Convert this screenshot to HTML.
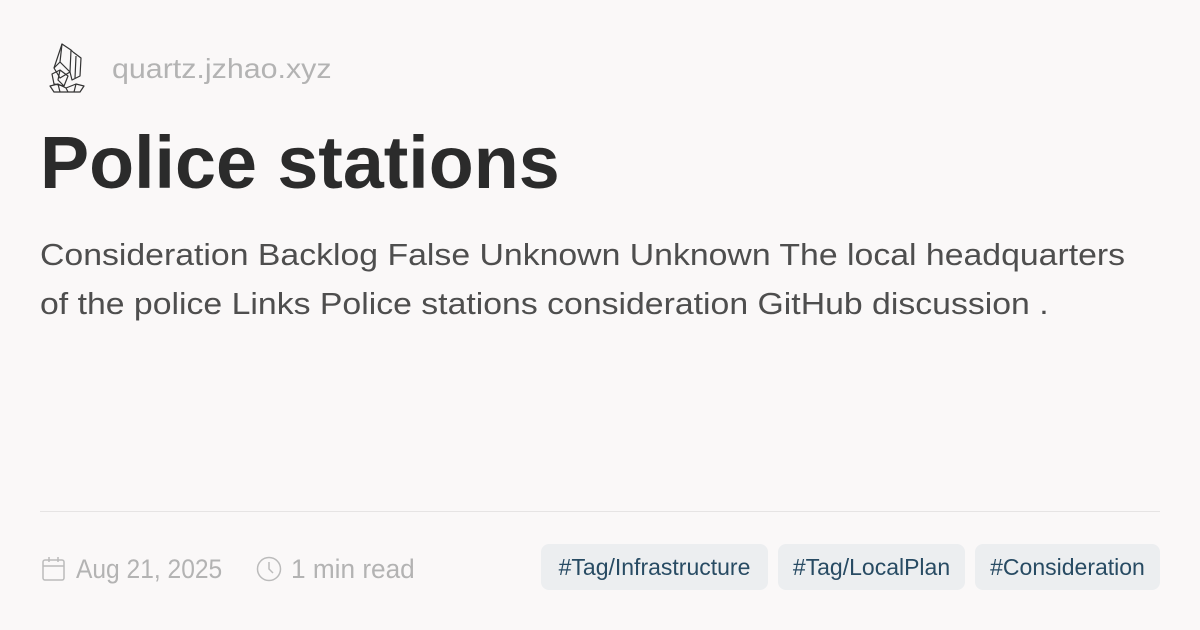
<!DOCTYPE html>
<html><head><style>
body{margin:0;width:1200px;height:630px;background:#faf8f8;font-family:"Liberation Sans",sans-serif;position:relative;overflow:hidden}
.a{position:absolute;white-space:nowrap;transform-origin:left top}
.tag{position:absolute;top:544px;height:46px;background:#eceef0;border-radius:8px;color:#284b63;font-size:23px;line-height:46px;text-align:center;overflow:hidden}
</style></head><body>
<svg class="a" style="left:46px;top:42px" width="44" height="52" viewBox="0 0 44 52" fill="none" stroke="#333" stroke-width="1.2" stroke-linejoin="round">
<path d="M16 2 L25 8 L24 30 L14 36 L8 26 Z"/><path d="M16 2 L14 20 L8 26"/><path d="M14 20 L24 30"/>
<path d="M27 10 L35 16 L34 34 L26 38 L24 30"/><path d="M27 10 L25 8"/><path d="M30 14 L29 36"/>
<path d="M6 32 L14 28 L22 34 L18 44 L8 42 Z"/><path d="M14 28 L12 38 L18 44"/>
<path d="M4 44 L12 42 L20 46 L30 42 L38 44 L34 50 L8 50 Z"/><path d="M12 42 L14 50 M20 46 L22 50 M30 42 L28 50"/>
</svg>
<div class="a" style="left:112px;top:53px;font-size:28px;color:#b3b3b3;transform:scaleX(1.085)">quartz.jzhao.xyz</div>
<div class="a" style="left:40px;top:120px;font-size:74px;font-weight:bold;color:#2b2b2b;transform:scaleX(.995)">Police stations</div>
<div class="a" style="left:40px;top:237px;font-size:31px;color:#4e4e4e;transform:scaleX(1.09)">Consideration Backlog False Unknown Unknown The local headquarters</div>
<div class="a" style="left:40px;top:286px;font-size:31px;color:#4e4e4e;transform:scaleX(1.09)">of the police Links Police stations consideration GitHub discussion .</div>
<div class="a" style="left:40px;top:511px;width:1120px;height:1px;background:#e6e4e4"></div>
<svg class="a" style="left:42px;top:556px" width="24" height="26" viewBox="0 0 24 26" fill="none" stroke="#bbb" stroke-width="1.5"><rect x="1" y="4" width="21" height="20" rx="2"/><path d="M1 10H22M7 1V6M16 1V6"/></svg>
<div class="a" style="left:76px;top:554px;font-size:27px;color:#b3b3b3;transform:scaleX(.91)">Aug 21, 2025</div>
<svg class="a" style="left:256px;top:556px" width="26" height="26" viewBox="0 0 26 26" fill="none" stroke="#bbb" stroke-width="1.5"><circle cx="13" cy="13" r="11.5"/><path d="M13 6V13L17 17"/></svg>
<div class="a" style="left:291px;top:554px;font-size:27px;color:#b3b3b3;transform:scaleX(.97)">1 min read</div>
<div class="tag" style="left:541px;width:227px">#Tag/Infrastructure</div>
<div class="tag" style="left:778px;width:187px">#Tag/LocalPlan</div>
<div class="tag" style="left:975px;width:185px">#Consideration</div>
</body></html>
